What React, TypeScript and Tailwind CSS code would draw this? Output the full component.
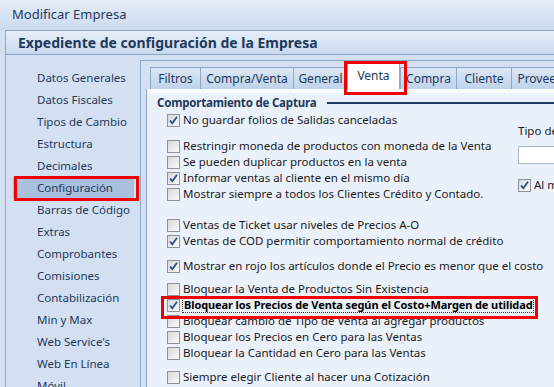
import React from "react";

const navItems = [
  "Datos Generales",
  "Datos Fiscales",
  "Tipos de Cambio",
  "Estructura",
  "Decimales",
  "Configuración",
  "Barras de Código",
  "Extras",
  "Comprobantes",
  "Comisiones",
  "Contabilización",
  "Min y Max",
  "Web Service's",
  "Web En Línea",
  "Móvil",
];

const tabs = [
  { label: "Filtros", w: "w-[50px]" },
  { label: "Compra/Venta", w: "w-[93px]" },
  { label: "General", w: "w-[54px]" },
  { label: "Venta", w: "w-[53px]", active: true },
  { label: "Compra", w: "w-[56px]" },
  { label: "Cliente", w: "w-[55px]" },
  { label: "Proveedor", w: "w-[70px]" },
];

function Check({ checked }: { checked?: boolean }) {
  return (
    <span className="relative w-[13px] h-[13px] shrink-0 border border-[#8f9296] bg-gradient-to-br from-[#d6d8db] to-[#fbfbfb]">
      {checked && (
        <svg width="11" height="11" viewBox="0 0 11 11" className="absolute left-[0px] top-[0px]">
          <path d="M2 5.5 L4.3 8.2 L9 1.8" fill="none" stroke="#2d4f8c" strokeWidth="1.8" />
        </svg>
      )}
    </span>
  );
}

function Row({ label, checked, bold, mt }: { label: string; checked?: boolean; bold?: boolean; mt?: string }) {
  return (
    <div className={`flex items-center h-[16px] gap-[3px] whitespace-nowrap ${mt ?? ""}`}>
      <Check checked={checked} />
      <span
        className={
          bold
            ? "font-bold text-[11px] tracking-[-0.1px] text-black outline-1 outline-dotted outline-[#333] leading-[14px] pl-[1px]"
            : "text-[#1b1b1b]"
        }
      >
        {label}
      </span>
    </div>
  );
}

export default function App() {
  return (
    <div
      className="relative w-[554px] h-[387px] overflow-hidden flex flex-col bg-[#d3e0f1] text-[11.5px]"
      style={{ fontFamily: '"Noto Sans", "Open Sans", sans-serif' }}
    >
      {/* barra de titulo */}
      <div className="h-[30px] shrink-0 flex items-center pl-[12px] bg-gradient-to-b from-[#e4edf9] to-[#cbdaee] text-[13px] text-[#1e395b]">
        Modificar Empresa
      </div>

      <div className="flex-1 ml-[5px] border-l border-t border-[#8ea8cb] flex flex-col min-h-0">
        <div className="h-[24px] shrink-0 flex items-center pl-[12px] border-b border-[#8ea8cb] bg-gradient-to-b from-[#e6eef9] to-[#c9d9ee] text-[14px] font-bold text-[#1e395b]">
          Expediente de configuración de la Empresa
        </div>

        <div className="flex flex-1 min-h-0">
          {/* menu lateral */}
          <div className="w-[134px] shrink-0 pt-[12px] flex flex-col">
            {navItems.map((item) => (
              <div
                key={item}
                className={
                  item === "Configuración"
                    ? "h-[22px] shrink-0 flex items-center ml-[7px] w-[121px] pl-[24px] bg-[#a9c0de] text-[#1e395b]"
                    : "h-[22px] shrink-0 flex items-center pl-[31px] text-[#1e395b]"
                }
              >
                {item}
              </div>
            ))}
          </div>

          {/* contenido */}
          <div className="flex-1 mt-[5px] border-l border-t border-[#8ea8cb] flex flex-col min-w-0">
            <div className="flex items-end h-[27px] mt-[1px] pl-[9px] shrink-0">
              {tabs.map((t) =>
                t.active ? (
                  <div
                    key={t.label}
                    className={`${t.w} shrink-0 h-[27px] flex items-center justify-center bg-white border-l border-r border-t border-[#8ea8cb] text-[#1e395b] text-[12px]`}
                  >
                    {t.label}
                  </div>
                ) : (
                  <div
                    key={t.label}
                    className={`${t.w} shrink-0 h-[22px] flex items-center justify-center bg-gradient-to-b from-[#dce8f6] to-[#bed2ea] border-l border-t border-[#8ea8cb] text-[#1e395b] text-[12px] whitespace-nowrap overflow-hidden`}
                  >
                    {t.label}
                  </div>
                )
              )}
            </div>

            <div className="flex-1 ml-[5px] border-l border-[#8ea8cb] bg-gradient-to-b from-white to-[#eaf1fa] to-[6px] pl-[10px] pt-[6px]">
              <div className="flex items-center h-[16px]">
                <span className="font-bold text-[11.5px] tracking-[-0.2px] text-[#1e395b] whitespace-nowrap">Comportamiento de Captura</span>
                <span className="flex-1 ml-[11px] h-[2px] bg-[#1f3a63]" />
              </div>

              <div className="flex mt-[1px]">
                <div className="w-[361px] shrink-0 pl-[10px]">
                  <Row label="No guardar folios de Salidas canceladas" checked />
                  <Row label="Restringir moneda de productos con moneda de la Venta" mt="mt-[10px]" />
                  <Row label="Se pueden duplicar productos en la venta" />
                  <Row label="Informar ventas al cliente en el mismo día" checked />
                  <Row label="Mostrar siempre a todos los Clientes Crédito y Contado." />
                  <Row label="Ventas de Ticket usar niveles de Precios A-O" mt="mt-[15px]" />
                  <Row label="Ventas de COD permitir comportamiento normal de crédito" checked />
                  <Row label="Mostrar en rojo los artículos donde el Precio es menor que el costo" checked mt="mt-[9px]" />
                  <Row label="Bloquear la Venta de Productos Sin Existencia" mt="mt-[7px]" />
                  <Row label="Bloquear los Precios de Venta según el Costo+Margen de utilidad" checked bold />
                  <Row label="Bloquear cambio de Tipo de Venta al agregar productos" />
                  <Row label="Bloquear los Precios en Cero para las Ventas" />
                  <Row label="Bloquear la Cantidad en Cero para las Ventas" />
                  <Row label="Siempre elegir Cliente al hacer una Cotización" mt="mt-[8px]" />
                </div>

                <div className="flex flex-col pt-[11px] whitespace-nowrap">
                  <div className="h-[16px] flex items-center text-[#1b1b1b]">Tipo de Venta</div>
                  <div className="mt-[7px] h-[18px] w-[60px] bg-white border border-[#abb9cc]" />
                  <div className="mt-[13px] h-[16px] flex items-center gap-[3px]">
                    <Check checked />
                    <span className="text-[#1b1b1b]">Al modificar</span>
                  </div>
                </div>
              </div>
            </div>
          </div>
        </div>
      </div>

      {/* recuadros rojos de anotacion */}
      <div className="absolute left-[14px] top-[176px] w-[125px] h-[25px] border-[3px] border-[#f00000]" />
      <div className="absolute left-[344px] top-[61px] w-[63px] h-[34px] border-[3px] border-[#f00000]" />
      <div className="absolute left-[161px] top-[296px] w-[377px] h-[23px] border-[3px] border-[#f00000]" />
    </div>
  );
}
